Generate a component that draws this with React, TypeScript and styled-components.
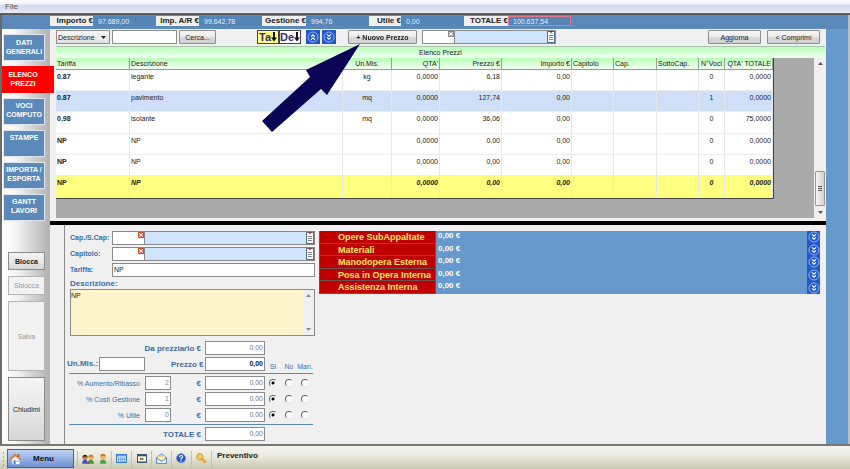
import React, { useState } from "react";
import styled, { createGlobalStyle, css } from "styled-components";

const GlobalStyle = createGlobalStyle`
  *, *::before, *::after { box-sizing: border-box; }
  body {
    margin: 0;
    background: #f0f0f0;
    font-family: "Liberation Sans", Arial, sans-serif;
    font-size: 7px;
    line-height: 9px;
    color: #222;
  }
  button, input, textarea, select { font: inherit; color: inherit; margin: 0; border-radius: 0; outline: none; }
  h2 { margin: 0; font: inherit; }
`;

/* ---------- window frame ---------- */

const Window = styled.div`
  min-height: 100vh;
  display: flex;
  flex-direction: column;
  overflow: hidden;
`;

const MenuBar = styled.nav`
  height: 15px;
  padding-left: 2px;
  background: linear-gradient(#fdfdfe 0, #f2f4fa 4px, #d3daec 5px, #dde2f2 11px, #f0f0f4 13px);
  border-bottom: 2px solid #5c5c5c;
`;

const MenuItem = styled.button`
  border: 0;
  padding: 2px 3px;
  background: none;
  color: #555;
  font-size: 8px;
`;

const Body = styled.div`
  flex: 1;
  display: flex;
  flex-direction: column;
  border-left: 2px solid #6a6a6a;
  border-right: 2px solid #b9bec6;
`;

const Totals = styled.header`
  height: 14px;
  padding: 1px 0 2px 48px;
  display: flex;
  background: #5b8aba;
`;

const Total = styled.label<{ $label: number }>`
  display: grid;
  grid-template-columns: ${(p) => p.$label}px 63px;
  font-size: 8px;
  line-height: 10px;
  font-weight: bold;
  height: 10px;
  span {
    background: #f0f0f0;
    text-align: right;
    white-space: nowrap;
  }
`;

const TotalValue = styled.input<{ $marked?: boolean }>`
  width: 63px;
  height: 10px;
  border: 1px solid ${(p) => (p.$marked ? "#e07a8c" : "#5585b6")};
  background: #5585b6;
  color: #e8f0f8;
  font-size: 7px;
  font-weight: normal;
  line-height: 8px;
  padding: 0 4px;
`;

const Columns = styled.div`
  flex: 1;
  display: flex;
  background: #6699cc;
`;

/* ---------- sidebar ---------- */

const Sidebar = styled.aside`
  width: 48px;
  flex: none;
  padding: 5px 0 3px 1px;
  display: flex;
  flex-direction: column;
  background: linear-gradient(90deg, #fff 0, #f4f4f4 14px, #b4b4b4 46px);
`;

const NavButton = styled.button<{ $active?: boolean }>`
  height: 27px;
  width: 42px;
  flex: none;
  margin-bottom: 5px;
  padding: 0 0 2px;
  border: 1px solid #dfe6ee;
  background: #5b8aba;
  color: #fff;
  font-weight: bold;
  line-height: 9px;
  white-space: pre-line;
  ${(p) =>
    p.$active &&
    css`
      width: 52px;
      margin-left: -1px;
      padding-right: 10px;
      border-color: #f00;
      background: #f00;
      position: relative;
      z-index: 2;
    `}
  &:nth-of-type(n + 3) { padding-bottom: 3px; }
`;

const SideActions = styled.div`
  margin-top: auto;
  padding-left: 5px;
  display: flex;
  flex-direction: column;
  gap: 6px;
`;

const SideButton = styled.button<{ $height: number }>`
  width: 37px;
  height: ${(p) => p.$height}px;
  padding: 0;
  border: 1px solid #8a8a8a;
  background: linear-gradient(#f4f4f4, #e8e8e8 50%, #d6d6d6);
  color: #222;
  &:disabled { background: #f2f2f2; color: #999; border-color: #b5b5b5; }
  &:first-child { font-weight: bold; }
`;

/* ---------- main column ---------- */

const Main = styled.main`
  flex: 1;
  min-width: 0;
  display: flex;
  flex-direction: column;
  background: #f0f0f0;
`;

const Gutter = styled.div`
  width: 22px;
  flex: none;
`;

const Toolbar = styled.div`
  height: 17px;
  padding: 1px 6px 2px;
  display: flex;
  align-items: stretch;
`;

const Spacer = styled.span<{ $width?: number }>`
  flex: ${(p) => (p.$width ? `0 0 ${p.$width}px` : "1")};
`;

const Button = styled.button<{ $width: number }>`
  width: ${(p) => p.$width}px;
  height: 14px;
  flex: none;
  padding: 0;
  border: 1px solid #8e8e8e;
  border-radius: 1px;
  background: linear-gradient(#f5f5f5, #ebebeb 50%, #dadada 50%, #d0d0d0);
  white-space: nowrap;
`;

const SelectBox = styled.span`
  width: 54px;
  display: flex;
  align-items: center;
  border: 1px solid #8e8e8e;
  background: linear-gradient(#f5f5f5, #e2e2e2);
  select {
    flex: 1;
    min-width: 0;
    appearance: none;
    border: 0;
    padding: 0 0 0 1px;
    background: none;
  }
  svg { margin-right: 3px; }
`;

const TextInput = styled.input<{ $width?: number; $align?: string; $tone?: string }>`
  width: ${(p) => (p.$width ? `${p.$width}px` : "100%")};
  height: 14px;
  min-width: 0;
  padding: 0 1px 1px;
  border: 1px solid #8a8a8a;
  background: #fff;
  text-align: ${(p) => p.$align || "left"};
  color: ${(p) => p.$tone || "#222"};
`;

const SortButton = styled.button<{ $on?: boolean }>`
  width: 22px;
  height: 14px;
  padding: 0;
  display: flex;
  align-items: center;
  justify-content: center;
  border: 1px solid #444;
  background: ${(p) => (p.$on ? "#ffff80" : "#fff")};
  color: #3d2585;
  font-size: 11px;
  font-weight: bold;
  line-height: 12px;
`;

const SquareButton = styled.button`
  width: 14px;
  height: 14px;
  padding: 0;
  border: 0;
  background: #2458c8;
  display: flex;
  align-items: center;
  justify-content: center;
`;

const ArrowAnchor = styled.div`
  position: relative;
  strong { font-weight: bold; }
`;

const Pointer = styled.svg`
  position: absolute;
  left: -88px;
  top: 14px;
  z-index: 5;
  pointer-events: none;
`;

const Lookup = styled.span<{ $width?: number }>`
  width: ${(p) => (p.$width ? `${p.$width}px` : "100%")};
  height: 14px;
  display: grid;
  grid-template-columns: 32px 1fr 8px;
  border: 1px solid #8a8a8a;
  background: #d0e4fb;
`;

const CodeCell = styled.span`
  display: flex;
  align-items: flex-start;
  background: #fff;
  border-right: 1px solid #8a8a8a;
  input { flex: 1; min-width: 0; width: 0; height: 12px; border: 0; padding: 0 1px; background: none; }
`;

const TinyButton = styled.button`
  padding: 0;
  border: 0;
  background: none;
  line-height: 0;
  display: block;
`;

const ListTitle = styled.h2`
  height: 12px;
  margin: 0 1px 0 6px;
  border-top: 1px solid #a5c8a5;
  background: linear-gradient(#b8ffb8, #f2fff2);
  text-align: center;
  line-height: 12px;
`;

const ListArea = styled.section`
  height: 160px;
  margin-left: 6px;
  display: flex;
  background: #aaa;
`;

const TableHolder = styled.div`
  flex: 1;
  min-width: 0;
  padding-right: 40px;
`;

const Table = styled.table`
  width: 100%;
  table-layout: fixed;
  border-collapse: separate;
  border-spacing: 0;
  background: #fff;
  border-right: 1px solid #444;
  border-bottom: 1px solid #444;
  th {
    height: 12px;
    padding: 0 1px;
    font-weight: normal;
    background: linear-gradient(#b8ffb8, #f2fff2);
    border-right: 1px solid #8aa88a;
    border-bottom: 1px solid #999;
    white-space: nowrap;
    overflow: hidden;
  }
`;

const Row = styled.tr<{ $tone?: "alt" | "current" }>`
  height: 21px;
  &:nth-child(3n) { height: 22px; }
  background: ${(p) => (p.$tone === "alt" ? "#cfdff8" : p.$tone === "current" ? "#ffff80" : "#fff")};
  ${(p) => p.$tone === "current" && css`td { font-weight: bold; font-style: italic; }`}
  td:first-child { font-weight: bold; font-style: normal; }
`;

const Cell = styled.td<{ $align: string }>`
  padding: 2px 1px 0;
  vertical-align: top;
  text-align: ${(p) => p.$align};
  border-right: 1px solid #e6e8ea;
  border-bottom: 1px solid #eceeee;
`;

const ScrollBar = styled.div<{ $width: number }>`
  width: ${(p) => p.$width}px;
  flex: none;
  padding: 4px 1px;
  display: flex;
  flex-direction: column;
  align-items: center;
  justify-content: space-between;
  background: #f0f0f0;
`;

const Thumb = styled.div`
  width: 10px;
  height: 35px;
  margin: auto 0 5px;
  padding: 14px 2px 0;
  border: 1px solid #979797;
  border-radius: 1px;
  background: linear-gradient(90deg, #f5f5f5, #d2d2d2);
  &::before {
    content: "";
    display: block;
    height: 5px;
    border-top: 1px solid #555;
    border-bottom: 1px solid #555;
    background: linear-gradient(transparent 1px, #555 1px, #555 2px, transparent 2px);
  }
`;

const Splitter = styled.div`
  height: 4px;
  margin-top: 3px;
  background: #000;
`;

/* ---------- detail panel ---------- */

const Detail = styled.section`
  flex: 1;
  margin-left: 14px;
  padding: 6px 6px 3px 2px;
  display: flex;
  align-items: flex-start;
  gap: 4px;
  border-left: 1px solid #8a8a8a;
`;

const Form = styled.form`
  width: 248px;
  flex: none;
  color: #3a6ea5;
`;

const FieldLabel = styled.label`
  font-size: 8px;
  font-weight: bold;
  line-height: 10px;
  white-space: nowrap;
`;

const FieldRow = styled.div`
  display: grid;
  grid-template-columns: 42px 1fr;
  align-items: center;
  margin: 0 0 2px 3px;
  ${FieldLabel} { font-size: 7px; }
`;

const BlockLabel = styled(FieldLabel)`
  display: block;
  margin-left: 3px;
`;

const NoteBox = styled.div`
  height: 47px;
  margin: 0 0 5px 3px;
  display: flex;
  border: 1px solid #8a8a8a;
  background: #fff5cc;
  textarea {
    flex: 1;
    border: 0;
    padding: 1px 0 0;
    resize: none;
    overflow: hidden;
    background: none;
    color: #222;
  }
`;

const PriceGrid = styled.div`
  display: grid;
  grid-template-columns: 78px 26px 30px 4px 60px 16px 16px 16px;
  grid-auto-rows: 14px;
  row-gap: 2px;
  align-items: center;
`;

const PriceLabel = styled.label<{ $from: number; $to: number; $bold?: boolean }>`
  grid-column: ${(p) => p.$from} / ${(p) => p.$to};
  text-align: right;
  white-space: nowrap;
  ${(p) => p.$bold && css`font-size: 8px; font-weight: bold;`}
`;

const PercentLabel = styled.label`
  grid-column: 1;
  padding-right: 5px;
  text-align: right;
  white-space: nowrap;
`;

const Amount = styled(TextInput)<{ $strong?: boolean }>`
  grid-column: 5;
  font-weight: ${(p) => (p.$strong ? "bold" : "normal")};
`;

const UnitField = styled.div`
  grid-column: 1 / 3;
  display: grid;
  grid-template-columns: 32px 46px;
  align-items: center;
`;

const OptionHead = styled.span`
  align-self: end;
  text-align: center;
  white-space: nowrap;
`;

const Rule = styled.hr`
  height: 1px;
  margin: 2px 2px;
  border: 0;
  background: #5b8aba;
`;

const Radio = styled.input`
  appearance: none;
  width: 8px;
  height: 8px;
  margin: 0;
  justify-self: center;
  border: 1px solid;
  border-color: #666 #eee #eee #666;
  border-radius: 50%;
  background: #fff;
  &:checked { background: radial-gradient(circle, #000 0, #000 1px, #fff 2px); }
`;

const CostList = styled.div`
  flex: 1;
  height: 63px;
  display: grid;
  grid-template-rows: repeat(5, 1fr);
  background: #6699cc;
`;

const CostRow = styled.div`
  display: grid;
  grid-template-columns: 117px 1fr 13px;
  min-height: 0;
`;

const CostName = styled.span`
  padding-left: 18px;
  overflow: hidden;
  background: #c00000;
  border: 1px solid #6a5050;
  border-top: 0;
  color: #ffe860;
  font-size: 9px;
  font-weight: bold;
  line-height: 12px;
  white-space: nowrap;
`;

const CostValue = styled.span`
  padding-left: 2px;
  color: #fff;
  font-size: 8px;
  font-weight: bold;
  line-height: 10px;
`;

const CostToggle = styled(SquareButton)`
  width: 13px;
  height: 100%;
`;

/* ---------- status bar ---------- */

const StatusBar = styled.footer`
  height: 26px;
  padding: 3px 0 2px 2px;
  display: flex;
  align-items: center;
  border-top: 2px solid #777;
  background: linear-gradient(#f6f5ee, #e6e5d8 50%, #c6c5ac);
`;

const Grip = styled.span`
  width: 5px;
  height: 16px;
  background: radial-gradient(circle, #aaa99a 1px, transparent 1px) 0 0 / 3px 4px repeat-y;
`;

const MenuButton = styled.button`
  width: 67px;
  height: 19px;
  margin-right: 3px;
  padding: 0 19px 0 2px;
  display: flex;
  align-items: center;
  justify-content: space-between;
  border: 1px solid #3a63b8;
  background: linear-gradient(#c0d2f4, #96b2e6 50%, #6f90d2);
  font-size: 8px;
  font-weight: bold;
  color: #111;
`;

const ToolGroup = styled.span<{ $width: number }>`
  width: ${(p) => p.$width}px;
  height: 16px;
  display: flex;
  align-items: center;
  justify-content: space-evenly;
  border-left: 1px solid #c3c2b2;
`;

const StatusText = styled.span`
  height: 16px;
  padding-left: 5px;
  border-left: 1px solid #c3c2b2;
  font-size: 8px;
  font-weight: bold;
  line-height: 10px;
`;

/* ---------- drawings ---------- */

const DoubleChevron = ({ up = false }: { up?: boolean }) => (
  <svg width="12" height="12" viewBox="0 0 12 12" fill="none" aria-hidden="true">
    <circle cx="6" cy="6" r="5" stroke="#9dbcf4" strokeWidth="0.9" />
    <g stroke="#fff" strokeWidth="1.2" transform={up ? "rotate(180 6 6)" : undefined}>
      <path d="M4 3.4 6 5.2 8 3.4M4 6.4 6 8.2 8 6.4" />
    </g>
  </svg>
);

const Triangle = ({ up = false, color = "#555", wide = 5 }: { up?: boolean; color?: string; wide?: number }) => (
  <svg width={wide} height="3" viewBox="0 0 6 3" preserveAspectRatio="none" aria-hidden="true">
    <path d={up ? "M0 3 3 0 6 3Z" : "M0 0 3 3 6 0Z"} fill={color} />
  </svg>
);

const DownArrow = () => (
  <svg width="6" height="10" viewBox="0 0 6 10" aria-hidden="true">
    <path d="M2 0H4V5.5H6L3 9.5 0 5.5H2Z" fill="#111" />
  </svg>
);

const ClearMark = ({ muted }: { muted?: boolean }) => (
  <svg width="6" height="6" viewBox="0 0 6 6" aria-hidden="true">
    <rect width="6" height="6" fill={muted ? "#888" : "#dd4a2c"} />
    <path d="M1.3 1.3 4.7 4.7M4.7 1.3 1.3 4.7" stroke="#fff" strokeWidth="1.1" />
  </svg>
);

const SheetMark = ({ muted }: { muted?: boolean }) => (
  <svg width="8" height="12" viewBox="0 0 8 12" aria-hidden="true">
    <rect x="0.5" y="0.5" width="7" height="11" fill="#fff" stroke="#55708c" />
    <path d="M2 4.5H6M2 6.5H6M2 8.5H6" stroke="#666" strokeWidth="0.8" />
    <path d="M2.4 0H5.6L4 2.4Z" fill={muted ? "#444" : "#d02020"} />
  </svg>
);

const HouseIcon = () => (
  <svg width="11" height="12" viewBox="0 0 11 12" aria-hidden="true">
    <path d="M1.8 6 6 3 9.5 6.5V11H2.5Z" fill="#fff" stroke="#c8c8d0" strokeWidth="0.5" />
    <path d="M0.4 6.6 5 1.6 10.6 7" fill="none" stroke="#e8772a" strokeWidth="1.6" />
    <path d="M7.8 1.2H9.2V4H7.8Z" fill="#b04a18" />
    <path d="M3.6 7.3H5.6V11H3.6Z" fill="#3c7bd0" />
    <path d="M6.8 7.5H8.4V9H6.8Z" fill="#70a8e8" />
  </svg>
);

const Person = ({ x, head, body, hair }: { x: number; head: string; body: string; hair: string }) => (
  <g transform={`translate(${x} 0)`}>
    <path d="M0.2 9.8C0.2 7 1.2 5.8 3 5.8S5.9 7 5.9 9.8Z" fill={body} />
    <circle cx="3" cy="3.4" r="2.5" fill={head} />
    <path d="M0.5 3.2C0.5 -0.2 5.5 -0.2 5.5 3.2 4 2.2 2.2 2.2 0.5 3.2Z" fill={hair} />
  </g>
);

const PeopleIcon = () => (
  <svg width="12" height="10" viewBox="0 0 12 10" aria-hidden="true">
    <Person x={6} head="#f0b060" body="#3a9a3a" hair="#c86a18" />
    <Person x={0} head="#c47a40" body="#2c58c0" hair="#3a2010" />
    <path d="M4.8 9.8 6.2 6.4 7.6 9.8Z" fill="#c83030" />
  </svg>
);

const PersonIcon = () => (
  <svg width="8" height="11" viewBox="0 0 6 10" aria-hidden="true">
    <Person x={0} head="#f2b766" body="#44a544" hair="#cf7420" />
  </svg>
);

const CalculatorIcon = () => (
  <svg width="11" height="9" viewBox="0 0 11 9" aria-hidden="true">
    <rect x="0.5" y="0.5" width="10" height="8" fill="#cfe4fb" stroke="#2f7ad6" />
    <path d="M1 1.5H10" stroke="#5a9ce8" strokeWidth="1.4" />
    <path d="M2 4H9.4M2 5.6H9.4M2 7.2H9.4" stroke="#2f7ad6" strokeWidth="0.9" strokeDasharray="1.3 0.7" />
  </svg>
);

const WindowIcon = () => (
  <svg width="10" height="9" viewBox="0 0 10 9" aria-hidden="true">
    <rect x="0.5" y="0.5" width="9" height="8" fill="#fbfbe8" stroke="#44546c" />
    <path d="M0.5 1.4H9.5" stroke="#34507c" strokeWidth="1.8" />
    <path d="M0.5 8H9.5" stroke="#34507c" />
    <circle cx="3.8" cy="4.9" r="1.1" fill="#d04040" />
    <circle cx="5.6" cy="4.9" r="1.1" fill="#3a9a3a" />
  </svg>
);

const MailIcon = () => (
  <svg width="11" height="11" viewBox="0 0 11 11" aria-hidden="true">
    <path d="M0.5 4.6 5.5 0.8 10.5 4.6V10.4H0.5Z" fill="#bdd6f6" stroke="#4a7fc8" strokeWidth="0.8" />
    <path d="M2 3.4H9V7.4H2Z" fill="#fff3b0" stroke="#d8c070" strokeWidth="0.5" />
    <path d="M0.6 5.2 5.5 8.2 10.4 5.2V10.4H0.6Z" fill="#e8f2fd" stroke="#4a7fc8" strokeWidth="0.8" />
  </svg>
);

const HelpIcon = () => (
  <svg width="11" height="11" viewBox="0 0 11 11" aria-hidden="true">
    <circle cx="6.2" cy="6.4" r="4.3" fill="#c8ccd4" />
    <circle cx="5" cy="5.2" r="4.6" fill="#2a55b8" stroke="#8aa8e0" strokeWidth="0.6" />
    <path d="M3.5 4.2C3.5 1.9 6.7 2 6.6 4 6.5 5.2 5 5 5 6.4" fill="none" stroke="#fff" strokeWidth="1.2" />
    <circle cx="5" cy="8" r="0.7" fill="#fff" />
  </svg>
);

const KeyIcon = () => (
  <svg width="11" height="11" viewBox="0 0 11 11" aria-hidden="true">
    <path d="M5 5 9.6 9.6M7.4 8.6 8.6 7.4" stroke="#b8801c" strokeWidth="2.4" />
    <path d="M5 5 9.4 9.4" stroke="#f6c840" strokeWidth="1.3" />
    <circle cx="3.8" cy="3.8" r="3.2" fill="#f8d050" stroke="#b8801c" strokeWidth="0.7" />
    <circle cx="3" cy="3" r="0.9" fill="#fff" stroke="#b8801c" strokeWidth="0.4" />
  </svg>
);

/* ---------- data ---------- */

const totals = [
  { name: "Importo €", value: "97.689,00", label: 43 },
  { name: "Imp. A/R €", value: "99.642,78", label: 43 },
  { name: "Gestione €", value: "994,76", label: 44 },
  { name: "Utile €", value: "0,00", label: 32 },
  { name: "TOTALE €", value: "100.637,54", label: 44, marked: true },
];

const navItems = ["DATI\nGENERALI", "ELENCO\nPREZZI", "VOCI\nCOMPUTO", "STAMPE\n\u00a0", "IMPORTA /\nESPORTA", "GANTT\nLAVORI"];

const columns: { name: string; width?: number; align: "left" | "right" | "center" }[] = [
  { name: "Tariffa", width: 74, align: "left" },
  { name: "Descrizione", align: "left" },
  { name: "Un.Mis.", width: 49, align: "center" },
  { name: "QTA'", width: 48, align: "right" },
  { name: "Prezzo €", width: 62, align: "right" },
  { name: "Importo €", width: 70, align: "right" },
  { name: "Capitolo", width: 42, align: "left" },
  { name: "Cap.", width: 43, align: "left" },
  { name: "SottoCap.", width: 42, align: "left" },
  { name: "N°Voci", width: 26, align: "center" },
  { name: "QTA' TOTALE", width: 48, align: "right" },
];

const rows: { tone?: "alt" | "current"; cells: string[] }[] = [
  { cells: ["0.87", "legante", "kg", "0,0000", "6,18", "0,00", "", "", "", "0", "0,0000"] },
  { tone: "alt", cells: ["0.87", "pavimento", "mq", "0,0000", "127,74", "0,00", "", "", "", "1", "0,0000"] },
  { cells: ["0.98", "isolante", "mq", "0,0000", "36,06", "0,00", "", "", "", "0", "75,0000"] },
  { cells: ["NP", "NP", "", "0,0000", "0,00", "0,00", "", "", "", "0", "0,0000"] },
  { cells: ["NP", "NP", "", "0,0000", "0,00", "0,00", "", "", "", "0", "0,0000"] },
  { tone: "current", cells: ["NP", "NP", "", "0,0000", "0,00", "0,00", "", "", "", "0", "0,0000"] },
];

const percents = [
  { id: "aumento", name: "% Aumento/Ribasso", value: "2" },
  { id: "costi", name: "% Costi Gestione", value: "1" },
  { id: "utile", name: "% Utile", value: "0" },
];

const costs = ["Opere SubAppaltate", "Materiali", "Manodopera Esterna", "Posa in Opera Interna", "Assistenza Interna"];

const LookupField = ({ id, width, muted, label }: { id: string; width?: number; muted?: boolean; label: string }) => (
  <Lookup $width={width}>
    <CodeCell>
      <input id={id} aria-label={label} />
      <TinyButton type="button" aria-label="Cancella"><ClearMark muted={muted} /></TinyButton>
    </CodeCell>
    <span />
    <TinyButton type="button" aria-label="Elenco"><SheetMark muted={muted} /></TinyButton>
  </Lookup>
);

const PercentRow = ({ id, name, value }: { id: string; name: string; value: string }) => {
  const [choice, setChoice] = useState("Si");
  return (
    <>
      <PercentLabel htmlFor={id}>{name}</PercentLabel>
      <TextInput id={id} $width={26} $align="right" $tone="#888" defaultValue={value} />
      <PriceLabel $from={3} $to={4} $bold htmlFor={`${id}-euro`}>€</PriceLabel>
      <Amount id={`${id}-euro`} $align="right" $tone="#777" defaultValue="0,00" />
      {["Si", "No", "Man."].map((o) => (
        <Radio key={o} type="radio" name={`${id}-mode`} aria-label={`${name} ${o}`} checked={choice === o} onChange={() => setChoice(o)} />
      ))}
    </>
  );
};

export default function App() {
  const [active, setActive] = useState(1);
  return (
    <Window>
      <GlobalStyle />
      <MenuBar><MenuItem>File</MenuItem></MenuBar>
      <Body>
        <Totals>
          {totals.map((t) => (
            <Total key={t.name} $label={t.label}>
              <span>{t.name}</span>
              <TotalValue readOnly value={t.value} $marked={t.marked} />
            </Total>
          ))}
        </Totals>
        <Columns>
          <Sidebar>
            {navItems.map((n, i) => (
              <NavButton key={n} $active={i === active} onClick={() => setActive(i)}>{n}</NavButton>
            ))}
            <SideActions>
              <SideButton $height={18}>Blocca</SideButton>
              <SideButton $height={19} disabled>Sblocca</SideButton>
              <SideButton $height={70} disabled>Salva</SideButton>
              <SideButton $height={64}>Chiudimi</SideButton>
            </SideActions>
          </Sidebar>
          <Main>
            <Toolbar>
              <SelectBox>
                <select aria-label="Campo di ricerca"><option>Descrizione</option></select>
                <Triangle color="#222" />
              </SelectBox>
              <Spacer $width={2} />
              <TextInput $width={65} aria-label="Testo da cercare" />
              <Spacer $width={2} />
              <Button $width={37}>Cerca...</Button>
              <Spacer $width={41} />
              <SortButton $on>Ta<DownArrow /></SortButton>
              <SortButton>De<DownArrow /></SortButton>
              <Spacer $width={5} />
              <SquareButton aria-label="Su"><DoubleChevron up /></SquareButton>
              <Spacer $width={2} />
              <SquareButton aria-label="Giù"><DoubleChevron /></SquareButton>
              <Spacer $width={12} />
              <ArrowAnchor>
                <Button $width={69}><strong>+ Nuovo Prezzo</strong></Button>
                <Pointer width="100" height="90" viewBox="0 0 100 90" aria-hidden="true">
                  <path d="M100 0 46 26 50 33 2 77 12 88 61 45 67 51Z" fill="#0a0455" />
                </Pointer>
              </ArrowAnchor>
              <Spacer $width={5} />
              <LookupField id="filter" label="Filtro capitolo" width={134} muted />
              <Spacer />
              <Button $width={53}>Aggiorna</Button>
              <Spacer $width={6} />
              <Button $width={53}>&lt; Comprimi</Button>
            </Toolbar>
            <ListTitle>Elenco Prezzi</ListTitle>
            <ListArea>
              <TableHolder>
                <Table>
                  <colgroup>{columns.map((c) => <col key={c.name} width={c.width} />)}</colgroup>
                  <thead>
                    <tr>{columns.map((c) => <th key={c.name} align={c.align}>{c.name}</th>)}</tr>
                  </thead>
                  <tbody>
                    {rows.map((r, i) => (
                      <Row key={i} $tone={r.tone}>
                        {r.cells.map((c, j) => <Cell key={j} $align={columns[j].align}>{c}</Cell>)}
                      </Row>
                    ))}
                  </tbody>
                </Table>
              </TableHolder>
              <ScrollBar $width={12}>
                <Triangle up />
                <Thumb />
                <Triangle />
              </ScrollBar>
            </ListArea>
            <Splitter />
            <Detail>
              <Form onSubmit={(e) => e.preventDefault()}>
                <FieldRow>
                  <FieldLabel htmlFor="cap">Cap./S.Cap:</FieldLabel>
                  <LookupField id="cap" label="Cap./S.Cap" />
                </FieldRow>
                <FieldRow>
                  <FieldLabel htmlFor="capitolo">Capitolo:</FieldLabel>
                  <LookupField id="capitolo" label="Capitolo" />
                </FieldRow>
                <FieldRow>
                  <FieldLabel htmlFor="tariffa">Tariffa:</FieldLabel>
                  <TextInput id="tariffa" defaultValue="NP" />
                </FieldRow>
                <BlockLabel htmlFor="descrizione">Descrizione:</BlockLabel>
                <NoteBox>
                  <textarea id="descrizione" defaultValue="NP" autoFocus onFocus={(e) => e.target.setSelectionRange(2, 2)} />
                  <ScrollBar $width={11}><Triangle up color="#888" /><Triangle color="#888" /></ScrollBar>
                </NoteBox>
                <PriceGrid>
                  <PriceLabel $from={1} $to={4} $bold htmlFor="listino">Da prezziario €</PriceLabel>
                  <Amount id="listino" $align="right" $tone="#777" defaultValue="0,00" />
                  <UnitField>
                    <FieldLabel htmlFor="um">Un.Mis.:</FieldLabel>
                    <TextInput id="um" $width={46} />
                  </UnitField>
                  <PriceLabel $from={3} $to={4} $bold htmlFor="prezzo">Prezzo €</PriceLabel>
                  <Amount id="prezzo" $align="right" $strong defaultValue="0,00" />
                  <OptionHead>Si</OptionHead>
                  <OptionHead>No</OptionHead>
                  <OptionHead>Man.</OptionHead>
                </PriceGrid>
                <Rule />
                <PriceGrid>{percents.map((p) => <PercentRow key={p.id} {...p} />)}</PriceGrid>
                <Rule />
                <PriceGrid>
                  <PriceLabel $from={1} $to={4} $bold htmlFor="totale">TOTALE €</PriceLabel>
                  <Amount id="totale" $align="right" $tone="#777" defaultValue="0,00" />
                </PriceGrid>
              </Form>
              <CostList>
                {costs.map((c) => (
                  <CostRow key={c}>
                    <CostName>{c}</CostName>
                    <CostValue>0,00 €</CostValue>
                    <CostToggle aria-label={`Apri ${c}`}><DoubleChevron /></CostToggle>
                  </CostRow>
                ))}
              </CostList>
            </Detail>
          </Main>
          <Gutter />
        </Columns>
      </Body>
      <StatusBar>
        <Grip />
        <MenuButton><HouseIcon />Menu</MenuButton>
        <ToolGroup $width={34}><PeopleIcon /><PersonIcon /></ToolGroup>
        <ToolGroup $width={20}><CalculatorIcon /></ToolGroup>
        <ToolGroup $width={20}><WindowIcon /></ToolGroup>
        <ToolGroup $width={20}><MailIcon /></ToolGroup>
        <ToolGroup $width={20}><HelpIcon /></ToolGroup>
        <ToolGroup $width={20}><KeyIcon /></ToolGroup>
        <StatusText>Preventivo</StatusText>
      </StatusBar>
    </Window>
  );
}
